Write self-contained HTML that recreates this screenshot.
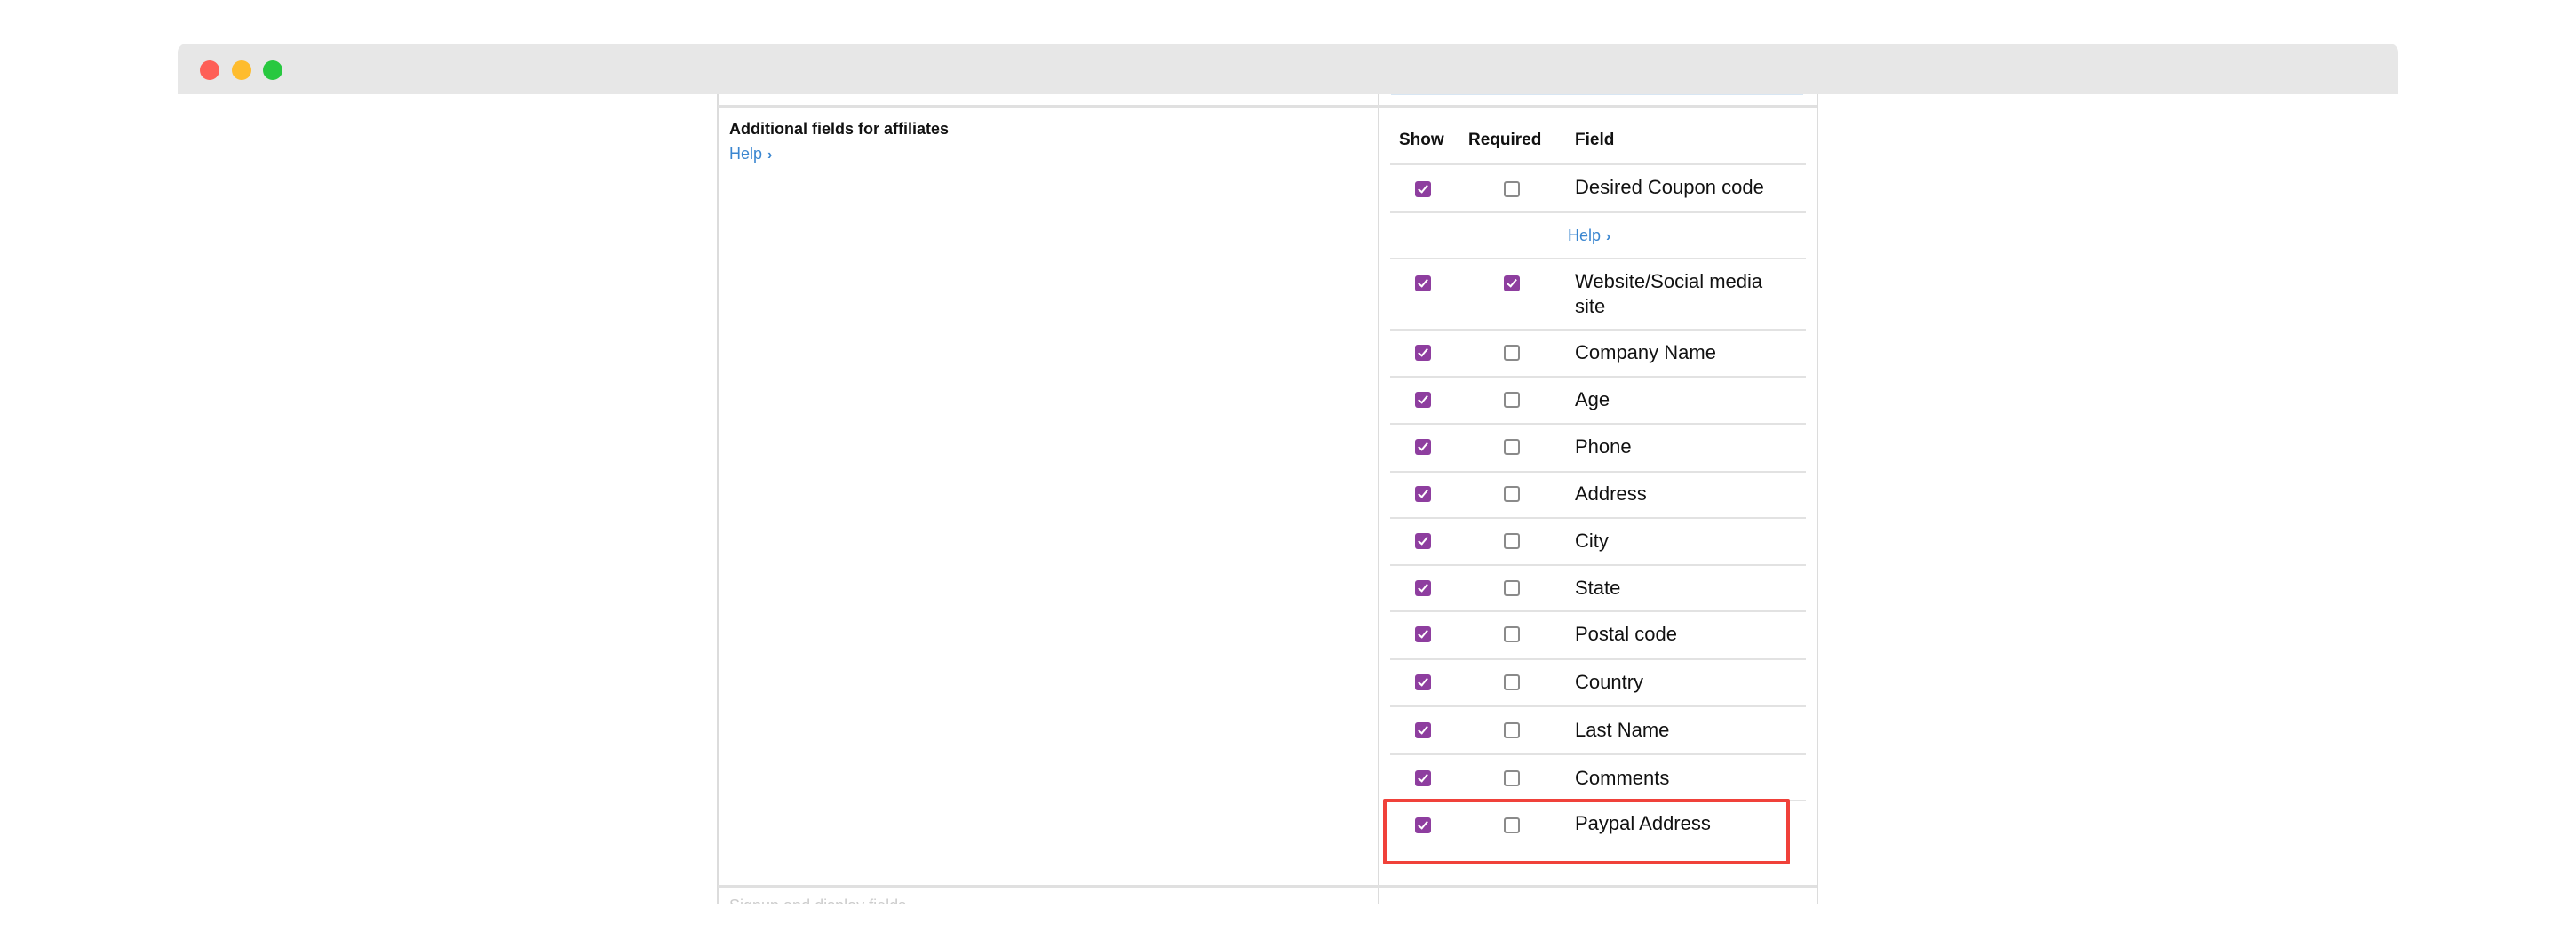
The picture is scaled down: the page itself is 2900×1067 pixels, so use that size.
<!DOCTYPE html>
<html><head><meta charset="utf-8"><style>
*{margin:0;padding:0;box-sizing:border-box}
body{width:2900px;height:1067px;background:#fff;position:relative;overflow:hidden;font-family:"Liberation Sans",Arial,sans-serif;color:#111}
.a{position:absolute}
.bar{left:200px;top:49px;width:2500px;height:57px;background:#e7e7e7;border-radius:10px 10px 0 0}
.dot{width:22px;height:22px;border-radius:50%;top:68px}
.vl{width:2px;background:#dcdcdc;top:106px;height:912px}
.hl{height:2px;background:#e2e2e2;left:1565px;width:468px}
.cb{width:18px;height:18px;border-radius:3px;left:1593px}
.on{background:#8e3e9f}
.on::after{content:"";position:absolute;left:6px;top:2px;width:4px;height:9px;border:solid #fff;border-width:0 2.5px 2.5px 0;transform:rotate(40deg)}
.off{border:2px solid #8a8a8a;background:#fff;left:1693px}
.on.r{left:1693px}
.t{left:1773px;font-size:22px;line-height:28px}
.help{color:#3a86d0;font-size:18px}
.help b{font-weight:bold;font-size:16px;margin-left:6px}
</style></head><body>
<div class="a bar"></div>
<div class="a dot" style="left:225px;background:#fe5f57"></div>
<div class="a dot" style="left:261px;background:#febc2e"></div>
<div class="a dot" style="left:296px;background:#28c840"></div>

<div class="a vl" style="left:807px"></div>
<div class="a vl" style="left:1551px"></div>
<div class="a vl" style="left:2045px"></div>
<div class="a" style="left:1566px;top:106px;width:464px;height:1px;background:#d8e6f3"></div>
<div class="a" style="left:808px;top:118px;width:1238px;height:3px;background:#e0e0e0"></div>
<div class="a" style="left:808px;top:996px;width:1238px;height:3px;background:#e0e0e0"></div>

<div class="a" style="left:821px;top:135px;font-size:18px;font-weight:bold">Additional fields for affiliates</div>
<div class="a help" style="left:821px;top:163px">Help<b>›</b></div>

<div class="a" style="left:1575px;top:147px;font-size:19px;font-weight:bold">Show</div>
<div class="a" style="left:1653px;top:147px;font-size:19px;font-weight:bold">Required</div>
<div class="a" style="left:1773px;top:147px;font-size:19px;font-weight:bold">Field</div>

<div class="a hl" style="top:184px"></div>
<div class="a hl" style="top:238px"></div>
<div class="a hl" style="top:290px"></div>
<div class="a hl" style="top:370px"></div>
<div class="a hl" style="top:423px"></div>
<div class="a hl" style="top:476px"></div>
<div class="a hl" style="top:530px"></div>
<div class="a hl" style="top:582px"></div>
<div class="a hl" style="top:635px"></div>
<div class="a hl" style="top:687px"></div>
<div class="a hl" style="top:741px"></div>
<div class="a hl" style="top:794px"></div>
<div class="a hl" style="top:848px"></div>
<div class="a hl" style="top:900px"></div>

<div class="a cb on" style="top:204px"></div><div class="a cb off" style="top:204px"></div><div class="a t" style="top:197px">Desired Coupon code</div>
<div class="a help" style="left:1765px;top:255px">Help<b>›</b></div>
<div class="a cb on" style="top:310px"></div><div class="a cb on r" style="top:310px"></div><div class="a t" style="top:303px">Website/Social media<br>site</div>
<div class="a cb on" style="top:388px"></div><div class="a cb off" style="top:388px"></div><div class="a t" style="top:383px">Company Name</div>
<div class="a cb on" style="top:441px"></div><div class="a cb off" style="top:441px"></div><div class="a t" style="top:436px">Age</div>
<div class="a cb on" style="top:494px"></div><div class="a cb off" style="top:494px"></div><div class="a t" style="top:489px">Phone</div>
<div class="a cb on" style="top:547px"></div><div class="a cb off" style="top:547px"></div><div class="a t" style="top:542px">Address</div>
<div class="a cb on" style="top:600px"></div><div class="a cb off" style="top:600px"></div><div class="a t" style="top:595px">City</div>
<div class="a cb on" style="top:653px"></div><div class="a cb off" style="top:653px"></div><div class="a t" style="top:648px">State</div>
<div class="a cb on" style="top:705px"></div><div class="a cb off" style="top:705px"></div><div class="a t" style="top:700px">Postal code</div>
<div class="a cb on" style="top:759px"></div><div class="a cb off" style="top:759px"></div><div class="a t" style="top:754px">Country</div>
<div class="a cb on" style="top:813px"></div><div class="a cb off" style="top:813px"></div><div class="a t" style="top:808px">Last Name</div>
<div class="a cb on" style="top:867px"></div><div class="a cb off" style="top:867px"></div><div class="a t" style="top:862px">Comments</div>
<div class="a cb on" style="top:920px"></div><div class="a cb off" style="top:920px"></div><div class="a t" style="top:913px">Paypal Address</div>

<div class="a" style="left:1557px;top:899px;width:458px;height:74px;border:4px solid #f0413a;border-radius:2px"></div>
<div class="a" style="left:821px;top:1010px;font-size:18px;color:#ccc;height:8px;overflow:hidden;line-height:18px">Signup and display fields</div>
</body></html>
